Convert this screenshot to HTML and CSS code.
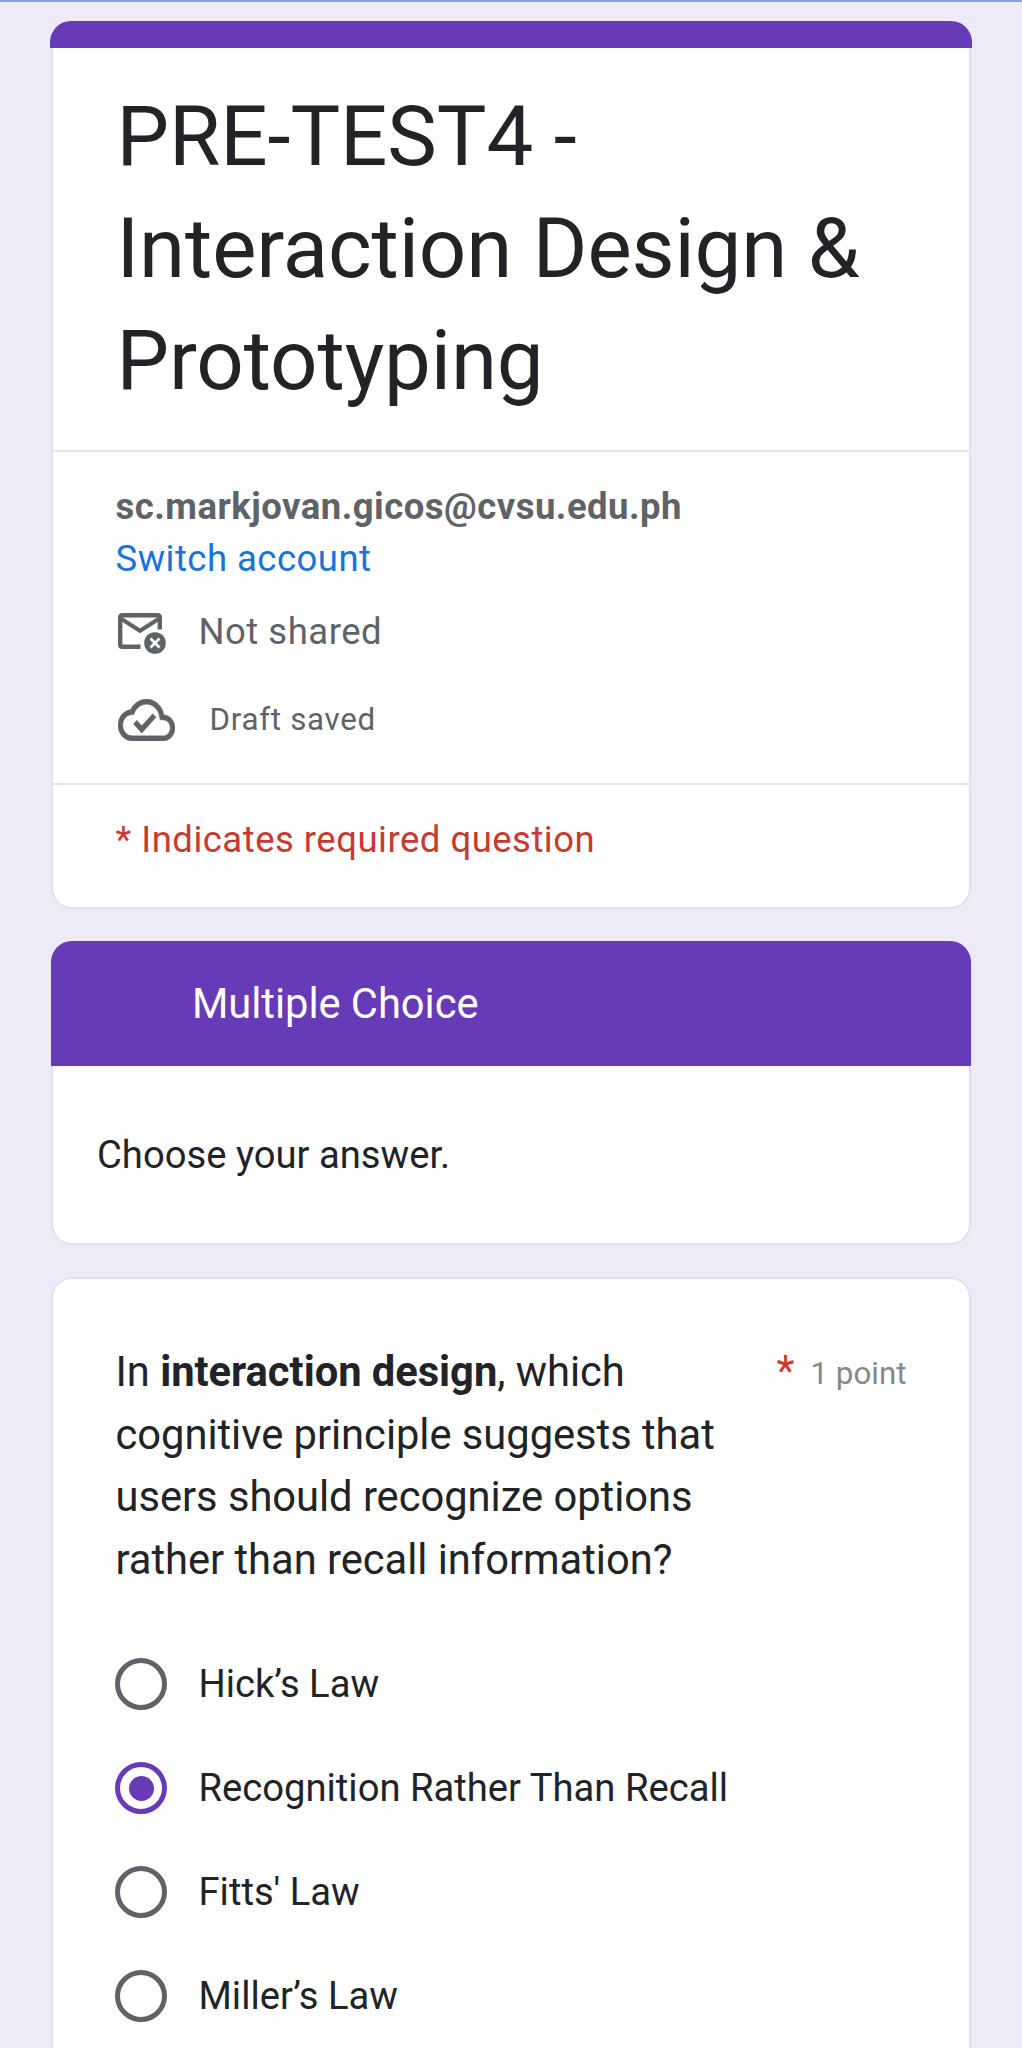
FILE: index.html
```html
<!DOCTYPE html>
<html lang="en">
<head>
<meta charset="utf-8">
<title>PRE-TEST4 - Interaction Design &amp; Prototyping</title>
<link rel="stylesheet" href="styles.css">
</head>
<body>
<main class="page">
  <section class="card intro">
    <div class="intro-bar"></div>
    <h1 class="title">PRE-TEST4 -<br>Interaction Design &amp;<br>Prototyping</h1>
    <div class="account">
      <div class="email">sc.markjovan.gicos@cvsu.edu.ph</div>
      <a class="switch">Switch account</a>
      <div class="status">
        <svg class="mail" viewBox="0 0 48 42" fill="none" stroke="#5f6368" stroke-width="4.4">
          <path d="M22.500 33.800H4.500Q2.200 33.800 2.200 31.500V4.500Q2.200 2.200 4.500 2.200H39.500Q41.800 2.200 41.800 4.500V16.500"/>
          <path d="M3.500 6L22 17.800L40.500 6" stroke-width="4"/>
          <circle cx="37" cy="30" r="10.800" fill="#5f6368" stroke="none"/>
          <path d="M32.500 25.500L41.500 34.500M41.500 25.500L32.500 34.500" stroke="#fff" stroke-width="2.600"/>
        </svg>
        <span>Not shared</span>
      </div>
      <div class="status draft">
        <svg class="cloud" viewBox="0 4 24 16" preserveAspectRatio="none" fill="#5f6368">
          <path stroke="#5f6368" stroke-width=".15" d="M19.350 10.040C18.670 6.590 15.640 4 12 4 9.110 4 6.600 5.640 5.350 8.040 2.340 8.360 0 10.910 0 14c0 3.310 2.690 6 6 6h13c2.760 0 5-2.240 5-5 0-2.640-2.050-4.780-4.650-4.960zM19 18H6c-2.210 0-4-1.790-4-4 0-2.050 1.530-3.760 3.560-3.970l1.070-.110.500-.950C8.080 7.140 9.940 6 12 6c2.620 0 4.880 1.860 5.390 4.430l.300 1.500 1.530.110c1.560.100 2.780 1.410 2.780 2.960 0 1.650-1.350 3-3 3zm-9-3.820l-2.090-2.090L6.500 13.500 10 17l6.010-6.010-1.410-1.410z"/>
        </svg>
        <span>Draft saved</span>
      </div>
    </div>
    <div class="required-note">* Indicates required question</div>
  </section>

  <section class="card section">
    <h2 class="section-title">Multiple Choice</h2>
    <p class="section-text">Choose your answer.</p>
  </section>

  <section class="card question">
    <div class="question-head">
      <p class="question-text">In <b>interaction design</b>, which<br>cognitive principle suggests that<br>users should recognize options<br>rather than recall information?</p>
      <span class="star">*</span>
      <span class="points">1 point</span>
    </div>
    <div class="options">
      <div class="option"><span class="radio"></span><span>Hick’s Law</span></div>
      <div class="option"><span class="radio checked"></span><span>Recognition Rather Than Recall</span></div>
      <div class="option"><span class="radio"></span><span>Fitts' Law</span></div>
      <div class="option"><span class="radio"></span><span>Miller’s Law</span></div>
    </div>
  </section>
</main>
</body>
</html>
```
FILE: styles.css
```css
* { box-sizing: border-box; }

body {
  margin: 0;
  background: #eeeaf8;
  font-family: Roboto, "Noto Sans", sans-serif;
  color: #222326;
}

.page {
  display: flex;
  flex-direction: column;
  gap: 32px;
  height: 2048px;
  padding: 19px 51px 0;
  border-top: 2px solid #84a3d6;
}

.card {
  flex: none;
  background: #fff;
  border: 2px solid #e4e1ea;
  border-radius: 21px;
}

.intro { height: 888px; border-top: 0; }

.intro-bar {
  height: 26.500px;
  margin: 0 -3px;
  background: #673ab7;
  border-radius: 21px 21px 0 0;
}

.title {
  margin: 0;
  height: 402.500px;
  padding: 33px 62px 0 63.500px;
  font-size: 83.400px;
  font-weight: 400;
  line-height: 112px;
  letter-spacing: -0.120px;
}

.account {
  height: 335px;
  padding: 28.500px 62.500px 0;
  border: solid #e6e6e6;
  border-width: 2px 0;
  font-size: 36.500px;
  line-height: 52px;
  letter-spacing: 0.480px;
  color: #5f6368;
}

.email { font-weight: 700; }

.switch { display: block; color: #1a73d9; }

.status {
  display: flex;
  align-items: center;
  height: 52px;
  margin-top: 21.500px;
  letter-spacing: 0.500px;
}

.mail { width: 48px; height: 42px; margin: 4px 32.500px 0 2.500px; }

.draft { margin-top: 35.500px; font-size: 31.300px; letter-spacing: 0.700px; }

.cloud { width: 57px; height: 42px; margin: 1px 34.500px 0 2.500px; }

.required-note {
  padding: 28.500px 62.500px 0;
  font-size: 36.500px;
  line-height: 52px;
  letter-spacing: 0.490px;
  color: #c83a30;
}

.section { height: 304px; border-top: 0; }

.section-title {
  margin: 0 -2px;
  height: 125px;
  padding-left: 141px;
  background: #673ab7;
  border-radius: 21px 21px 0 0;
  color: #fff;
  font-size: 41.700px;
  font-weight: 400;
  line-height: 125px;
  letter-spacing: -0.050px;
}

.section-text {
  margin: 0;
  padding-left: 44px;
  font-size: 38.200px;
  line-height: 178px;
}

.question {
  height: 771px;
  padding: 62px 62.500px 0;
  border-bottom: 0;
  border-radius: 21px 21px 0 0;
}

.question-head { display: flex; align-items: flex-start; }

.question-text {
  flex: none;
  width: 661px;
  margin: 0;
  font-size: 41.700px;
  line-height: 62.500px;
  letter-spacing: -0.030px;
}

.star {
  flex: none;
  width: 34px;
  font-size: 41.700px;
  line-height: 60px;
  color: #d0392c;
}

.points {
  flex: none;
  white-space: nowrap;
  font-size: 31.300px;
  line-height: 66px;
  color: #85888b;
}

.options { margin-top: 41px; }

.option {
  display: flex;
  align-items: center;
  gap: 31.500px;
  height: 104.100px;
  font-size: 38.200px;
}

.radio {
  flex: none;
  display: grid;
  place-items: center;
  width: 52px;
  height: 52px;
  margin-left: -0.500px;
  border: 5px solid #5f6368;
  border-radius: 50%;
}

.checked { border-color: #673ab7; }

.checked::before {
  content: "";
  width: 25px;
  height: 25px;
  border-radius: 50%;
  background: #673ab7;
}
```
